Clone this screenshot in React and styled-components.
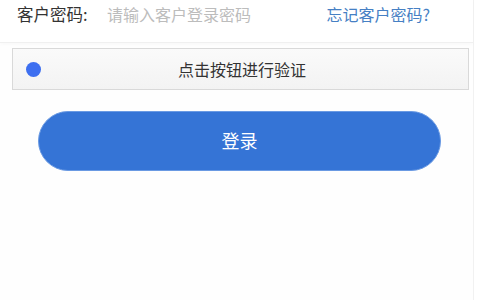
import React from "react"
import styled, { createGlobalStyle } from "styled-components"

const GlobalStyle = createGlobalStyle`
  body {
    margin: 0;
    background: #ffffff;
    font-family: "Noto Sans CJK SC", "Liberation Sans", sans-serif;
  }
`

const Page = styled.div`
  width: 473px;
  height: 300px;
  border-right: 1px solid #f1f1f1;
  background: #fefefe;
`

const FieldRow = styled.div`
  height: 43px;
  display: flex;
  align-items: center;
  padding: 0 0 14px 17px;
  background: #ffffff;
  border-bottom: 1px solid #f0f0f0;
  box-shadow: 0 2px 3px rgba(0, 0, 0, 0.02);
  box-sizing: border-box;
`

const Label = styled.span`
  font-size: 16.5px;
  color: #333333;
  width: 90px;
  flex: none;
`

const Placeholder = styled.span`
  font-size: 16px;
  color: #bcbcbc;
  flex: 1;
`

const Link = styled.a`
  font-size: 16px;
  color: #4680c4;
  margin-right: 43px;
  text-decoration: none;
`

const Verify = styled.div`
  margin: 5px 4px 0 12px;
  height: 42px;
  border: 1px solid #d9d9d9;
  background: linear-gradient(#fafafa, #f3f3f3);
  display: flex;
  align-items: center;
  position: relative;
  box-sizing: border-box;
`

const Dot = styled.span`
  position: absolute;
  left: 13px;
  top: 50%;
  width: 15px;
  height: 15px;
  margin-top: -7.5px;
  border-radius: 50%;
  background: #3d6ff0;
`

const VerifyText = styled.span`
  flex: 1;
  text-align: center;
  font-size: 16px;
  color: #333333;
  padding-left: 3px;
`

const LoginButton = styled.button`
  display: block;
  margin: 21px 0 0 38px;
  width: 403px;
  height: 60px;
  padding: 0 0 3px;
  border: 1px solid #6a9ae3;
  border-radius: 30px;
  background: #3574d6;
  color: #ffffff;
  font-family: inherit;
  font-size: 18px;
  box-sizing: border-box;
`

export default function App() {
  return (
    <>
      <GlobalStyle />
      <Page>
        <FieldRow>
          <Label>客户密码:</Label>
          <Placeholder>请输入客户登录密码</Placeholder>
          <Link>忘记客户密码?</Link>
        </FieldRow>
        <Verify>
          <Dot />
          <VerifyText>点击按钮进行验证</VerifyText>
        </Verify>
        <LoginButton>登录</LoginButton>
      </Page>
    </>
  )
}
